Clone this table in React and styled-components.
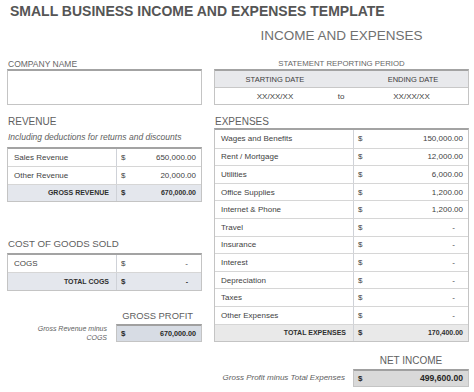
import React from "react";
import styled, { createGlobalStyle } from "styled-components";

const GlobalStyle = createGlobalStyle`
  html, body { margin: 0; padding: 0; background: #ffffff; }
  body {
    font-family: "Liberation Sans", Arial, sans-serif;
    color: #3f3f3f;
  }
  * { box-sizing: border-box; }
`;

const Page = styled.div`
  width: 474px;
  height: 392px;
  padding: 3px 5px 0 7px;
  overflow: hidden;
`;

const Title = styled.h1`
  margin: 0 0 0 3px;
  font-size: 14px;
  line-height: 17px;
  font-weight: 700;
  color: #555555;
`;

const Sheet = styled.div`
  display: grid;
  grid-template-columns: 195px 255px;
  column-gap: 12px;
  align-items: start;
  margin-top: 8px;
`;

const Subtitle = styled.div`
  grid-column: 2;
  text-align: center;
  font-size: 13.5px;
  line-height: 16px;
  color: #707070;
  margin-bottom: 15px;
`;

const Column = styled.div`
  display: flex;
  flex-direction: column;
`;

const FieldLabel = styled.div`
  line-height: 10px;
  color: #666666;
  padding-left: ${(p) => (p.$center ? 0 : 1)}px;
  text-align: ${(p) => (p.$center ? "center" : "left")};
  font-size: ${(p) => (p.$center ? 7.8 : 8.5)}px;
`;

const CompanyBox = styled.div`
  height: 36px;
  border: 1px solid #c4c4c4;
  border-top: 2px solid #a3a3a3;
  background: #ffffff;
`;

const PeriodTable = styled.div`
  display: grid;
  grid-template-columns: 120px 12px 1fr;
  grid-template-rows: 17px 16px;
  border: 1px solid #c4c4c4;
  border-top: 2px solid #a3a3a3;
`;

const PeriodHead = styled.div`
  display: flex;
  align-items: center;
  justify-content: center;
  background: #e8e9ec;
  border-bottom: 1px solid #c8c8c8;
  font-size: 7.5px;
  color: #404040;
  padding-left: ${(p) => p.$shift || 0}px;
`;

const PeriodCell = styled.div`
  display: flex;
  align-items: center;
  justify-content: center;
  font-size: 8px;
  color: #404040;
  padding-left: ${(p) => p.$shift || 0}px;
`;

const SectionHeading = styled.div`
  font-size: ${(p) => p.$size || 10}px;
  line-height: 12px;
  color: #606060;
  margin-top: ${(p) => p.$top || 0}px;
  padding-left: ${(p) => p.$indent ?? 1}px;
  padding-right: ${(p) => p.$padRight || 0}px;
  text-align: ${(p) => p.$align || "left"};
`;

const Note = styled.div`
  margin-top: 4px;
  padding-left: 1px;
  font-size: 8.5px;
  line-height: 10px;
  font-style: italic;
  color: #5e5e5e;
`;

const Table = styled.div`
  margin-top: ${(p) => p.$top || 0}px;
  border: 1px solid #c4c4c4;
  border-top: 2px solid #a3a3a3;
`;

const Row = styled.div`
  display: grid;
  grid-template-columns: ${(p) => p.$label}px 1fr;
  height: 17.6px;
  background: ${(p) =>
    p.$total ? (p.$tone === "gray" ? "#e9e9e9" : "#e4e7ed") : "#ffffff"};
  & + & {
    border-top: 1px solid #d6d6d6;
  }
`;

const Label = styled.div`
  display: flex;
  align-items: center;
  justify-content: ${(p) => (p.$total ? "flex-end" : "flex-start")};
  padding: ${(p) => (p.$total ? "0 7px 0 0" : "0 0 0 6px")};
  border-right: 1px solid #cfd2d8;
  font-size: ${(p) => (p.$total ? 7 : 8)}px;
  font-weight: ${(p) => (p.$total ? 700 : 400)};
  color: ${(p) => (p.$total ? "#2f2f2f" : "#3f3f3f")};
  white-space: nowrap;
`;

const Value = styled.div`
  display: flex;
  align-items: center;
  justify-content: space-between;
  padding: 0 5px 0 4px;
  font-size: ${(p) => (p.$total ? 7 : 8)}px;
  font-weight: ${(p) => (p.$total ? 700 : 400)};
  color: ${(p) => (p.$total ? "#2f2f2f" : "#3f3f3f")};
`;

const Currency = styled.span`
  font-size: 8px;
`;

const Dash = styled.span`
  margin-right: 8px;
`;

const Summary = styled.div`
  display: flex;
  align-items: center;
  justify-content: flex-end;
  margin-top: ${(p) => p.$top || 0}px;
`;

const Caption = styled.div`
  max-width: ${(p) => p.$max}px;
  margin-right: ${(p) => p.$gap}px;
  text-align: right;
  font-size: ${(p) => p.$size}px;
  line-height: 9px;
  font-style: italic;
  color: #5e5e5e;
`;

const SummaryBox = styled.div`
  width: ${(p) => p.$width}px;
  height: ${(p) => p.$height}px;
  display: flex;
  align-items: center;
  justify-content: space-between;
  padding: 0 5px 0 4px;
  background: ${(p) => p.$bg};
  border: 1px solid #c4c4c4;
  border-top: 2px solid #a0a0a0;
  font-weight: 700;
  color: #262626;
  font-size: ${(p) => p.$size}px;
`;

const revenue = [
  ["Sales Revenue", "650,000.00"],
  ["Other Revenue", "20,000.00"],
];

const expenses = [
  ["Wages and Benefits", "150,000.00"],
  ["Rent / Mortgage", "12,000.00"],
  ["Utilities", "6,000.00"],
  ["Office Supplies", "1,200.00"],
  ["Internet & Phone", "1,200.00"],
  ["Travel", null],
  ["Insurance", null],
  ["Interest", null],
  ["Depreciation", null],
  ["Taxes", null],
  ["Other Expenses", null],
];

function Amount({ value }) {
  return value ? <span>{value}</span> : <Dash>-</Dash>;
}

function LineRow({ label, value, width, total, tone }) {
  return (
    <Row $label={width} $total={total} $tone={tone}>
      <Label $total={total}>{label}</Label>
      <Value $total={total}>
        <Currency>$</Currency>
        <Amount value={value} />
      </Value>
    </Row>
  );
}

export default function App() {
  return (
    <>
      <GlobalStyle />
      <Page>
        <Title>SMALL BUSINESS INCOME AND EXPENSES TEMPLATE</Title>
        <Sheet>
          <Subtitle>INCOME AND EXPENSES</Subtitle>

          <Column>
            <FieldLabel>COMPANY NAME</FieldLabel>
            <CompanyBox />
          </Column>
          <Column>
            <FieldLabel $center>STATEMENT REPORTING PERIOD</FieldLabel>
            <PeriodTable>
              <PeriodHead>STARTING DATE</PeriodHead>
              <PeriodHead />
              <PeriodHead $shift={11}>ENDING DATE</PeriodHead>
              <PeriodCell>XX/XX/XX</PeriodCell>
              <PeriodCell>to</PeriodCell>
              <PeriodCell $shift={8}>XX/XX/XX</PeriodCell>
            </PeriodTable>
          </Column>

          <Column>
            <SectionHeading $top={10.5}>REVENUE</SectionHeading>
            <Note>Including deductions for returns and discounts</Note>
            <Table $top={5}>
              {revenue.map(([label, value]) => (
                <LineRow key={label} label={label} value={value} width={109} />
              ))}
              <LineRow label="GROSS REVENUE" value="670,000.00" width={109} total />
            </Table>

            <SectionHeading $top={36} $size={9.7}>COST OF GOODS SOLD</SectionHeading>
            <Table $top={2.5}>
              <LineRow label="COGS" value={null} width={109} />
              <LineRow label="TOTAL COGS" value={null} width={109} total />
            </Table>

            <SectionHeading $top={19} $size={9.4} $align="right" $padRight={9} $indent={0}>
              GROSS PROFIT
            </SectionHeading>
            <Summary $top={2}>
              <Caption $max={74} $gap={9} $size={7}>
                Gross Revenue minus COGS
              </Caption>
              <SummaryBox $width={86} $height={18} $bg="#d7dce4" $size={7.2}>
                <Currency>$</Currency>
                <span>670,000.00</span>
              </SummaryBox>
            </Summary>
          </Column>

          <Column>
            <SectionHeading $top={10.5}>EXPENSES</SectionHeading>
            <Table $top={0.5}>
              {expenses.map(([label, value]) => (
                <LineRow key={label} label={label} value={value} width={139} />
              ))}
              <LineRow label="TOTAL EXPENSES" value="170,400.00" width={139} total tone="gray" />
            </Table>

            <SectionHeading $top={13} $align="center" $indent={139}>
              NET INCOME
            </SectionHeading>
            <Summary $top={1.5}>
              <Caption $max={200} $gap={8} $size={8}>
                Gross Profit minus Total Expenses
              </Caption>
              <SummaryBox $width={116} $height={18.5} $bg="#d9d9d9" $size={8.6}>
                <Currency>$</Currency>
                <span>499,600.00</span>
              </SummaryBox>
            </Summary>
          </Column>
        </Sheet>
      </Page>
    </>
  );
}
